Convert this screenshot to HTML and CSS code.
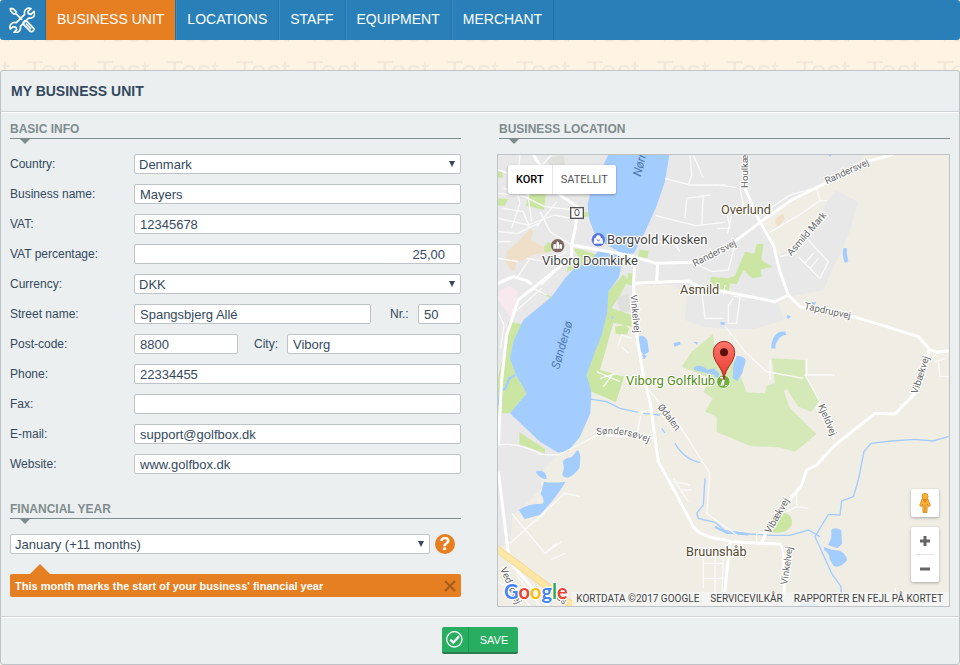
FILE: index.html
```html
<!DOCTYPE html>
<html lang="en">
<head>
<meta charset="utf-8">
<meta name="viewport" content="width=device-width, initial-scale=1">
<title>My business unit</title>
<link rel="stylesheet" href="styles.css">
</head>
<body>
<svg class="backdrop" aria-hidden="true">
  <defs>
    <pattern id="test" x="26" y="40" width="70" height="39" patternUnits="userSpaceOnUse">
      <text x="0" y="2">Test</text>
      <text x="0" y="41">Test</text>
    </pattern>
  </defs>
  <rect width="100%" height="100%" fill="url(#test)"/>
</svg>

<nav class="nav">
  <a class="nav-home" href="#" aria-label="Settings">
    <svg viewBox="0 0 78 78" width="26" height="26" fill="none" stroke="#fff" stroke-width="5" stroke-linejoin="round" stroke-linecap="round">
      <path d="M4 5l8 0 9 9-1 6-6 1-9-9zM20 19l18 18M43 46l5-5 6 2 20 21c4 5-5 13-10 9L44 53zM52 51l13 14"/>
      <path d="M66 5c-9-5-23 3-19 17L22 47C10 43-1 54 4 66l9-7 8 2 2 7-8 8c13 3 22-7 19-18l25-25c13 3 22-8 16-20l-9 9-8-2-1-7z"/>
    </svg>
  </a>
  <a class="nav-item active" href="#">BUSINESS UNIT</a>
  <a class="nav-item" href="#">LOCATIONS</a>
  <a class="nav-item" href="#">STAFF</a>
  <a class="nav-item" href="#">EQUIPMENT</a>
  <a class="nav-item" href="#">MERCHANT</a>
</nav>

<form class="panel">
  <h1 class="panel-title">MY BUSINESS UNIT</h1>
  <div class="columns">
    <div class="details">
      <section class="basic">
        <h2 class="section-title">BASIC INFO</h2>
        <div class="row"><label class="label" for="country">Country:</label><span class="select"><select id="country"><option>Denmark</option></select></span></div>
        <div class="row"><label class="label" for="name">Business name:</label><input class="field" id="name" value="Mayers"></div>
        <div class="row"><label class="label" for="vat">VAT:</label><input class="field" id="vat" value="12345678"></div>
        <div class="row"><label class="label" for="vatp">VAT percentage:</label><input class="field amount" id="vatp" value="25,00"></div>
        <div class="row"><label class="label" for="currency">Currency:</label><span class="select"><select id="currency"><option>DKK</option></select></span></div>
        <div class="row"><label class="label" for="street">Street name:</label><input class="field" id="street" value="Spangsbjerg Allé"><label class="label-nr" for="nr">Nr.:</label><input class="field nr" id="nr" value="50"></div>
        <div class="row"><label class="label" for="post">Post-code:</label><input class="field post" id="post" value="8800"><label class="label-city" for="city">City:</label><input class="field" id="city" value="Viborg"></div>
        <div class="row"><label class="label" for="phone">Phone:</label><input class="field" id="phone" value="22334455"></div>
        <div class="row"><label class="label" for="fax">Fax:</label><input class="field" id="fax" value=""></div>
        <div class="row"><label class="label" for="email">E-mail:</label><input class="field" id="email" value="support@golfbox.dk"></div>
        <div class="row"><label class="label" for="web">Website:</label><input class="field" id="web" value="www.golfbox.dk"></div>
      </section>
      <section class="financial">
        <h2 class="section-title">FINANCIAL YEAR</h2>
        <div class="row year">
          <span class="select"><select aria-label="Financial year"><option>January (+11 months)</option></select></span>
          <button class="help" type="button" aria-label="Help">?</button>
        </div>
        <div class="notice">
          <span>This month marks the start of your business' financial year</span>
          <button class="close" type="button" aria-label="Close"><svg viewBox="0 0 12 12" width="12" height="12"><path d="M1 1l10 10M11 1L1 11" stroke="#a35c1c" stroke-width="2"/></svg></button>
        </div>
      </section>
    </div>

    <section class="location">
      <h2 class="section-title">BUSINESS LOCATION</h2>
      <div class="map">
        <svg class="map-art" viewBox="24 30 1353 1353" preserveAspectRatio="xMidYMid slice">
          <rect x="0" y="0" width="1400" height="1400" fill="#f0ede5"/>
          <path fill="#e8e8e8" d="M24 30H1120L1105 55 990 125 890 180 815 235 835 262 865 335 935 290 995 200 1035 135 1105 170 1075 270 1000 435 898 455 865 475 885 525 790 552 705 552 640 545 585 525 590 450 550 420 435 420 430 500 360 530 320 640 200 935 150 985 155 1030 90 1095 68 1110 62 1190 24 1210Z"/>
          <g fill="#dfe0dc"><path d="M380 460l30-15 20 20-5 35h-35zM170 40l50-10 10 45-40 10z"/></g>
          <path fill="#f7e9ee" d="M24 440L60 422 85 440 68 515 55 510 24 462Z"/>
          <path fill="#f0dfc8" d="M50 320L85 290 122 250 130 262 122 285 150 300 175 310 172 322 130 330 100 345 80 350 75 375 62 375 48 350ZM855 235L860 220 880 205 884 222 865 245Z"/>
          <g fill="#cbe6a3">
            <path d="M118 148H168L162 195 107 182ZM280 202l20-2v14l-18 2zM162 305l14-15 12 10-4 20-20 2zM24 80l14-2v20H24zM24 160l30 2-10 20H24zM448 315l28 2-4 22-28-4zM250 310l30 5 40 15-60 40-30 10 5-25 30-20zM155 440l30 15-5 5-25-15z"/>
            <path d="M55 530L97 537 62 640 78 690 110 745 60 805H24V700L45 610Z"/>
            <path d="M355 440L400 388 415 405 390 450 365 490 425 510 425 545 370 533 330 675 402 695 378 772 305 740 285 735 300 640 330 560ZM415 383l22 5-12 35-14-6zM375 545l30-5 12 10-5 18-35 0z"/>
            <path d="M88 862L165 912V925L88 898Z"/>
            <path d="M662 395L715 400 735 393 765 320 793 326 800 296 820 297 814 345 848 365 812 374 815 395 786 400 760 375 740 418 720 415 717 440 690 435 660 412Z"/>
            <path d="M847 1163Q865 1108 885 1104 910 1110 905 1140 895 1166 847 1163Z"/>
          </g>
          <path fill="#d5e9b8" d="M575 665L605 620 668 568 680 630 730 640 750 690 770 742 825 745 830 722 855 715 845 640 945 645 945 690 990 765 965 800 925 785 890 732 881 737 900 790 980 867 915 920 865 907 780 903 715 875 680 860 680 815 645 800 668 760 640 742 660 700Z"/>
          <g fill="#a3ccff">
            <path d="M355 30H538L525 110 497 190 465 260 432 325 400 328 335 290 312 262 297 220 293 180 305 125 330 80Z"/>
            <path d="M325 318L392 328 392 375 386 398 355 440 352 500 335 570 315 620 290 690 304 740 301 805 270 875 235 918 205 923 150 890 60 805 110 745 78 690 60 640 70 590 100 525 185 455 225 400 255 368 300 350Z"/>
            <path d="M262 915q14 8 6 55-20 25-34 28-18 0-17-12 8-12 1-37 12-12 27-12zM137 980q30-10 34 22-20 2-34-22zM162 1010q28 5 65 0-30 50-78 100l-45 12-17-26q20-20 70-20 10-12-5-28z"/>
            <path d="M447 575q10-8 25 10l5 35-15 10-18-20zM455 628l15 4-8 12zM550 594l20-4 2 8-18 8zM610 590l14 2-2 8zM365 512l6 5-6 7zM612 666q20-10 40 8l20-4 15 15-10 6-65-16z"/>
            <path d="M740 633q25 0 27 15l-10 35-15 25-14-8 2-40zM678 683l10 2-2 14-14-4z"/>
            <path d="M843 610q5-55 43-50l3 10q-18 0-26 17-10 10-6 24zM1060 310l10-1 1 20 4 20-10 5q-10-22-5-44zM960 470l18 2-4 10-16-2zM893 510l10 4-8 8-6-6zM1014 30l10 0-2 5zM690 532l14 0 0 8-10 0zM1024 1154q12-10 30 2l2 40-14 14-28-10 10-22z"/>
            <path d="M1002 1206q30 12 43 10 25 10 26 30-20 25-40 17l-12-20q-2-20-17-28z"/>
            <path d="M925 1383q18-16 60-6v6z"/>
          </g>
          <g fill="none" stroke="#a3ccff" stroke-width="4">
            <path d="M1377 874L1330 888 1275 883 1205 888 1143 895 1122 920 1105 1005 1090 1055 1055 1068 1050 1110 1015 1108 975 1175 1025 1285 1053 1325V1360M300 762l50 8 40 20 55 12M460 805l50 5M515 850l10 14M555 895q30 50 75 57M645 1000l-5 80-20 25 5 15 50 12 30 25 75 10 60 4 60 0 55-16 35 20"/>
            <path d="M26 740l20-10 12-30 18-10M30 750l-6 30M675 1145l35 18 65 5" stroke-width="7"/>
          </g>
          <g fill="none" stroke="#fafafa" stroke-width="4">
            <path d="M24 75l60 20 55-15 45-50M24 145l80 10 60 30 90 10M24 220l90 20 80-30 50 10M70 95l20 80-25 75M105 90l20 140M40 190l60 10 20 50M24 260l60 5 60-30M150 200l30 60 65 40M40 130l80 20M90 30l-6 65M24 290h40M200 170l-60 75M230 320l-60 30-60-10M120 340l-40 60M24 340l60 10M155 420l60-60M75 500l80-70M130 430l40 20M24 500l18 40-10 70"/>
            <path d="M525 100l75 20 105 0M600 30l5 60-10 30M497 212l120 30 88-10M590 160l-5 60M640 150l-5 90M590 160l70-10M610 30l30 70M675 118l65 10M705 175l15 75-40 0M750 130l10 50-35 30-12 55M740 280l-25 95-50 5-60-30M635 440l10 80 55 0M705 420l-5 30M730 460l-15 20 0 55 25 0 10-80-20 0M840 190l60-40 70-20M840 262l100-60 50-35 20 0M980 130l10 35M870 335l45-10M925 335l65 65 25-50-60-65M945 355l25-30M960 370l25-30"/>
            <path d="M510 290h40l20 30M385 600l10-30 30 10M395 605l20 20M320 680l70 30M330 700l50-15M340 725l30-40M440 870l15-70 30-5M475 735l90 100 95 150-10 120 90 65M24 900q60-10 130 28l50 2 60-30 60-30 170 10M550 1000l45 70M550 1010l50 10M575 1035h30M60 1195l165-150 45 10M65 1105l100 120 50-35M165 1225l35-30M180 1245l45-20M120 1140l45-35M705 545l65 80 60 55 110 20M840 645v60M950 640v50M945 690h90"/>
            <path d="M945 690l45 80-10 20 55 95M890 1100l30-15 35 5M920 1040l0 40M800 1195v-30l50-5M1230 775l10 15M1335 650l35-10M1345 650l5 45 27 0M1345 615l-20 30M640 1230l0 100M640 1255h60M640 1300h60M675 1210v140M700 1225l-5 150M625 1200l10 30M660 1345l40 10M80 1290l70 93M60 1310l60 73M24 1310l50 30M860 1360h60M1216 1330v40"/>
          </g>
          <g fill="none" stroke="#fff" stroke-width="9" stroke-linejoin="round">
            <path d="M245 300L410 330 500 355 610 352 705 312 810 232 905 165 975 130 1130 50 1210 28"/>
            <path d="M765 30V130L810 232 850 300 870 380 895 450 930 485 1090 515 1190 545 1285 575 1318 612 1340 622 1377 617"/>
            <path d="M430 415L595 408 640 430 705 440 855 470 895 450M503 355L500 408M130 30l80 120 52 35-5 60-12 55v35L160 405 85 465 50 570 35 705 25 900M24 415L70 395 110 407 125 418"/>
            <path d="M436 345L430 415 440 570 462 705 480 770 505 950 555 1040 610 1145Q630 1175 705 1185L725 1190 870 1198Q885 1202 882 1360M720 1190L700 1383M815 1195L835 1145 935 1020 950 975 980 960 1035 900 1155 805 1215 807 1275 745 1298 690 1318 612"/>
            <path d="M25 980L58 1250 175 1383"/>
          </g>
          <path fill="none" stroke="#f3d794" stroke-width="22" d="M18 1210L110 1278 250 1383"/>
          <path fill="none" stroke="#fee6a5" stroke-width="17" d="M18 1210L110 1278 250 1383"/>

          <g class="lake-label">
            <text transform="translate(452 96) rotate(-76)">Nørresø</text>
            <text transform="translate(207 674) rotate(-74)">Søndersø</text>
          </g>
          <g class="road-label">
            <text transform="translate(421 450) rotate(84)">Vinkelvej</text>
            <text transform="translate(614 365) rotate(-27)">Randersvej</text>
            <text transform="translate(1010 118) rotate(-25)">Randersvej</text>
            <text transform="translate(774 129) rotate(-90)">Houlkærvej</text>
            <text transform="translate(904 334) rotate(-49)">Asmild Mark</text>
            <text transform="translate(941 492) rotate(12)">Tapdrupvej</text>
            <text transform="translate(1282 748) rotate(-72)">Vibækvej</text>
            <text transform="translate(984 782) rotate(67)">Kjeldvej</text>
            <text transform="translate(840 1167) rotate(-60)">Vibækvej</text>
            <text transform="translate(892 1320) rotate(-82)">Vinkelvej</text>
            <text transform="translate(502 787) rotate(52)">Ødalen</text>
            <text transform="translate(30 1272) rotate(66)">Vedsøvej</text>
            <text transform="translate(192 1356) rotate(38)">ius</text>
            <path id="shore" fill="none" stroke="none" d="M320 870Q400 858 480 895"/>
            <text><textPath href="#shore">Søndersøvej</textPath></text>
          </g>
          <g class="town-label">
            <text x="693" y="206">Overlund</text>
            <text x="570" y="448">Asmild</text>
            <text x="588" y="1234">Bruunshåb</text>
          </g>
          <g class="poi-label">
            <text x="351" y="296">Borgvold Kiosken</text>
            <text x="156" y="359">Viborg Domkirke</text>
            <text class="golf" x="408" y="720">Viborg Golfklub</text>
          </g>
          <g>
            <rect x="242" y="188" width="38" height="32" fill="#fff" stroke="#555" stroke-width="4"/>
            <text class="sign" x="261" y="213" text-anchor="middle">O</text>
            <circle cx="325" cy="284" r="20" fill="#5b73e0"/>
            <path d="M314 280h22l2 15h-26zM319 280v-5q6-8 12 0v5" fill="#fff" stroke="#fff" stroke-width="2"/>
            <path d="M320 284q5 6 10 0" fill="none" stroke="#5b73e0" stroke-width="3"/>
            <circle cx="203" cy="302" r="20" fill="#7d665d"/>
            <path d="M190 311v-12l4-3 4 3v12zM199 311v-18l4-4 4 4v18zM208 311v-12l4-3 4 3v12z" fill="#fff"/>
            <circle cx="700" cy="710" r="20" fill="#71ae3d" stroke="#fff" stroke-width="2"/>
            <path d="M690 698h8l4 8-3 16M699 706l-6 16M706 722h6" stroke="#fff" stroke-width="4" fill="none"/>
            <path d="M702 704C699 666 670 654 670 622A32 33 0 0 1 734 622C734 654 705 666 702 704Z" fill="url(#pin)" stroke="#a62c25" stroke-width="3"/>
            <circle cx="702" cy="622" r="12" fill="#5a100d"/>
          </g>
          <defs><linearGradient id="pin" x2="0" y2="1"><stop stop-color="#ff776b"/><stop offset="1" stop-color="#e4362c"/></linearGradient></defs>
          <text class="logo" x="42" y="1361"><tspan fill="#4285f4">G</tspan><tspan fill="#ea4335">o</tspan><tspan fill="#fbbc05">o</tspan><tspan fill="#4285f4">g</tspan><tspan fill="#34a853">l</tspan><tspan fill="#ea4335">e</tspan></text>
        </svg>
        <div class="map-type"><button type="button" class="on">KORT</button><button type="button">SATELLIT</button></div>
        <div class="map-tools">
          <button class="pegman" type="button" aria-label="Street view"><svg viewBox="0 0 36 60" width="12" height="20"><path d="M9 18h18l7 20-5 3-4-8-1 26H12L11 33l-4 8-5-3z" fill="#fcb22c" stroke="#c77d19" stroke-width="2"/><circle cx="18" cy="10" r="9" fill="#fcb22c" stroke="#c77d19" stroke-width="2"/><path d="M11 20h14l-7 10z" fill="#f08020"/><path d="M18 37v21" stroke="#c77d19" stroke-width="2"/></svg></button>
          <div class="zoom">
            <button type="button" aria-label="Zoom in"><svg viewBox="0 0 10 10" width="10" height="10"><path d="M0 5h10M5 0v10" stroke="#666" stroke-width="3"/></svg></button>
            <button type="button" aria-label="Zoom out"><svg viewBox="0 0 10 10" width="10" height="10"><path d="M0 5h10" stroke="#666" stroke-width="3"/></svg></button>
          </div>
        </div>
        <div class="credits"><span>KORTDATA ©2017 GOOGLE</span><a href="#">SERVICEVILKÅR</a><a href="#">RAPPORTER EN FEJL PÅ KORTET</a></div>
      </div>
    </section>
  </div>
  <div class="footer">
    <button class="save" type="button">
      <span class="save-icon"><svg viewBox="0 0 51 51" width="17" height="17" fill="none" stroke="#fff"><circle cx="25" cy="25" r="23" stroke-width="4"/><path d="M13 26l9 9 17-19" stroke-width="7"/></svg></span>
      <span class="save-text">SAVE</span>
    </button>
  </div>
</form>
</body>
</html>
```
FILE: styles.css
```css
* { box-sizing: border-box; }

body {
  margin: 0;
  background: #fff4e4;
  color: #34495e;
  font: 12px/20px "Liberation Sans", Arial, sans-serif;
}

button, input, select {
  margin: 0;
  font: inherit;
  color: inherit;
}

button { padding: 0; border: 0; cursor: pointer; }

.backdrop {
  position: absolute;
  z-index: -1;
  top: 0;
  left: 0;
  width: 100%;
  height: 100%;
}
.backdrop text { font-size: 29px; fill: #f2e8da; }

/* Navigation */
.nav {
  display: flex;
  height: 40px;
  background: #2980b9;
  border-radius: 3px;
}
.nav a {
  border-right: 1px solid #2472a4;
  color: #fff;
  font-size: 14px;
  line-height: 39px;
  text-decoration: none;
}
.nav-home { display: flex; padding: 7px 10px 0 9px; }
.nav-item { padding: 0 11px 0 10px; border-left: 1px solid #3a8ec5; }
.nav a.active { background: #e67e22; border-left-color: #e67e22; }

/* Panel */
.panel {
  margin-top: 30px;
  background: #ebeff0;
  border: 1px solid #bdc3c7;
  border-radius: 3px;
}
.panel-title {
  margin: 0;
  padding: 0 10px;
  border-bottom: 1px solid #d0d4d7;
  font-size: 14px;
  line-height: 40px;
}
.columns {
  display: grid;
  grid-template-columns: 451fr 453fr;
  gap: 36px;
  padding: 7px 9px 9px;
  border-top: 1px solid #fff;
  border-bottom: 1px solid #d0d4d7;
}
.section-title {
  position: relative;
  margin: 0 0 15px;
  border-bottom: 1px solid #7f8c8d;
  color: #7f8c8d;
  font-size: 12px;
  line-height: 18px;
}
.section-title::after {
  content: "";
  position: absolute;
  top: 19px;
  left: 10px;
  border: 5px solid transparent;
  border-top-color: #7f8c8d;
  border-bottom: 0;
}
.location .section-title { margin-left: 2px; }
.financial { margin-top: 26px; }

/* Form rows */
.row { display: flex; margin-bottom: 10px; }
.label { flex: 0 0 124px; }
.label-nr { flex: 0 0 47px; padding-left: 19px; }
.label-city { flex: 0 0 49px; padding-left: 16px; }
.field, select {
  flex: 1;
  min-width: 0;
  width: 100%;
  height: 20px;
  padding: 1px 5px 0;
  background: #fff;
  border: 1px solid #bdc3c7;
  border-radius: 2px;
  font-size: 13px;
}
.amount { padding-right: 15px; text-align: right; }
.nr { flex: 0 0 43px; }
.post { flex: 0 0 104px; }
.select { position: relative; display: flex; flex: 1; }
select { padding: 0 4px; appearance: none; }
.select::after {
  content: "";
  position: absolute;
  top: 7px;
  right: 6px;
  border: 3px solid transparent;
  border-top: 6px solid #34495e;
  border-bottom: 0;
  pointer-events: none;
}
.year { gap: 5px; padding-right: 6px; }
.help {
  width: 20px;
  height: 20px;
  background: #e67e22;
  border-radius: 50%;
  color: #fff;
  font-size: 18px;
  font-weight: bold;
  line-height: 20px;
}
.notice {
  position: relative;
  display: flex;
  justify-content: space-between;
  align-items: center;
  height: 23px;
  margin-top: 20px;
  padding: 0 5px;
  background: #e67e22;
  border-radius: 2px;
  color: #fff;
  font-size: 11px;
  font-weight: bold;
}
.notice::before {
  content: "";
  position: absolute;
  bottom: 100%;
  left: 20px;
  border: 10px solid transparent;
  border-top: 0;
  border-bottom-color: #e67e22;
}
.close { display: flex; background: none; }

/* Map */
.map {
  position: relative;
  aspect-ratio: 1;
  overflow: hidden;
  border: 1px solid #bdc3c7;
  font-family: Roboto, sans-serif;
}
.map-art { display: block; width: 100%; height: 100%; font-family: Roboto, sans-serif; }
.map-art text { paint-order: stroke; stroke: #fff; stroke-width: 7px; stroke-linejoin: round; }
.map-art .lake-label text { font-size: 36px; font-style: italic; fill: #5078ae; stroke: none; }
.road-label text { font-size: 29px; fill: #686868; }
.town-label text { font-size: 38px; fill: #54482f; }
.poi-label text { font-size: 39px; fill: #444; }
.map-art .golf { fill: #569022; }
.map-art .sign { font-size: 26px; fill: #444; stroke: none; }
.map-art .logo { font-family: Lato, sans-serif; font-size: 60px; font-weight: bold; }

.map-type {
  position: absolute;
  top: 10px;
  left: 10px;
  display: flex;
  height: 29px;
  background: #fff;
  border-radius: 2px;
  box-shadow: 0 1px 3px rgba(0, 0, 0, .3);
}
.map-type button {
  padding: 0 8px;
  background: none;
  color: #565656;
  font-size: 11px;
}
.map-type button.on {
  border-right: 1px solid #e5e5e5;
  color: #000;
  font-weight: 500;
}
.map-tools { position: absolute; right: 10px; bottom: 24px; width: 28px; }
.pegman, .zoom {
  width: 28px;
  background: #fff;
  border-radius: 2px;
  box-shadow: 0 1px 3px rgba(0, 0, 0, .3);
}
.pegman, .zoom button {
  display: flex;
  align-items: center;
  justify-content: center;
  height: 28px;
}
.pegman { margin-bottom: 10px; }
.zoom { padding: 0 5px; }
.zoom button { width: 18px; height: 27px; background: none; }
.zoom button + button { height: 28px; border-top: 1px solid #e2e2e2; }
.credits {
  position: absolute;
  right: 0;
  bottom: 0;
  display: flex;
  gap: 11px;
  padding: 0 6px 0 4px;
  background: rgba(245, 245, 245, .8);
  color: #444;
  font-size: 10px;
  line-height: 14px;
  white-space: nowrap;
}
.credits a { color: #444; text-decoration: none; }

/* Footer */
.footer {
  display: flex;
  justify-content: center;
  padding: 9px 0 10px;
  border-top: 1px solid #fff;
}
.save {
  display: flex;
  height: 27px;
  background: #27ae60;
  border-bottom: 2px solid #2c7a4d;
  border-radius: 2px;
  color: #fff;
  font-size: 11px;
  line-height: 26px;
}
.save-icon {
  display: flex;
  align-items: center;
  height: 25px;
  padding: 0 5px 0 4px;
  border-right: 1px solid #229a55;
}
.save-text { padding: 0 10px 0 11px; }
```
